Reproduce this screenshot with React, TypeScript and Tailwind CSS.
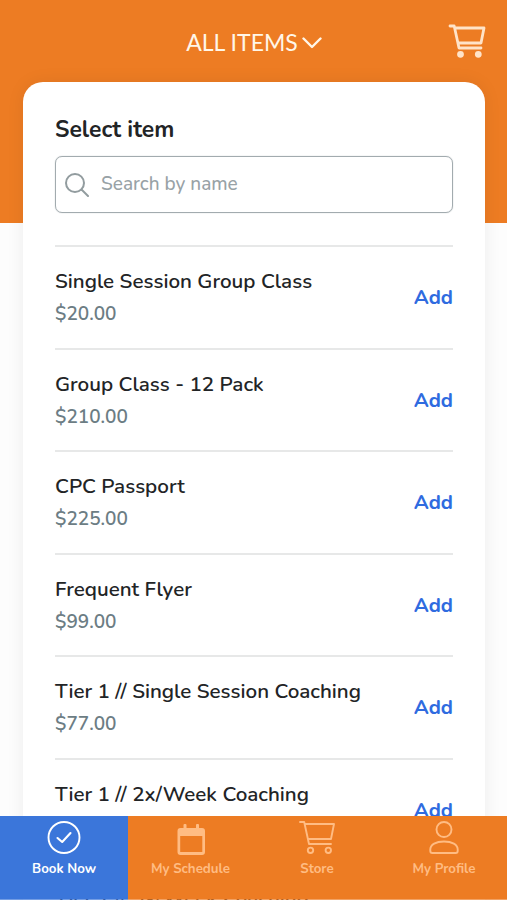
import React, { useState } from 'react';
import clsx from 'clsx';

interface Item {
  name: string;
  price: string;
}

const ITEMS: Item[] = [
  { name: 'Single Session Group Class', price: '$20.00' },
  { name: 'Group Class - 12 Pack', price: '$210.00' },
  { name: 'CPC Passport', price: '$225.00' },
  { name: 'Frequent Flyer', price: '$99.00' },
  { name: 'Tier 1 // Single Session Coaching', price: '$77.00' },
  { name: 'Tier 1 // 2x/Week Coaching', price: '$520.00' },
  { name: 'Tier 1 // 3x/Week Coaching', price: '$720.00' },
];

const CartIcon = ({ className, filled }: { className?: string; filled?: boolean }) => (
  <svg className={className} viewBox="0 0 38 34" fill="none" stroke="currentColor" strokeWidth={filled ? 2.8 : 1.9} strokeLinecap="round" strokeLinejoin="round">
    <path d="M2 2H6.200L11 24H33M6.800 4H36L33 19H10" />
    <circle cx="12.5" cy="30.3" r={filled ? 2 : 2.7} fill={filled ? 'currentColor' : 'none'} />
    <circle cx="30.3" cy="30.3" r={filled ? 2 : 2.7} fill={filled ? 'currentColor' : 'none'} />
  </svg>
);

const CheckIcon = () => (
  <svg className="h-[34px] w-[34px]" viewBox="0 0 34 34" fill="none" stroke="currentColor" strokeWidth="1.9" strokeLinecap="round" strokeLinejoin="round">
    <circle cx="17" cy="17.5" r="15.5" />
    <path d="M10.500 18L15.200 22L23.500 13" strokeWidth="2.1" />
  </svg>
);

const CalendarIcon = () => (
  <svg className="h-[34px] w-[34px]" viewBox="0 0 34 34" fill="currentColor">
    <rect x="9.500" y="4" width="3" height="7" rx="1" />
    <rect x="22" y="4" width="3" height="7" rx="1" />
    <path fillRule="evenodd" d="M6.500 8H28a3 3 0 0 1 3 3V32a3 3 0 0 1-3 3H6.500A3 3 0 0 1 3.500 32V11A3 3 0 0 1 6.500 8ZM6.200 16V32H28.300V16Z" />
  </svg>
);

const ProfileIcon = () => (
  <svg className="h-[34px] w-[34px]" viewBox="0 0 34 34" fill="none" stroke="currentColor" strokeWidth="1.9" strokeLinejoin="round">
    <circle cx="17" cy="9.500" r="7.500" />
    <path d="M3.300 31V29.500C3.300 24.500 9 21.500 17 21.500S30.700 24.500 30.700 29.500V31Q30.700 33 28.700 33H5.300Q3.300 33 3.300 31Z" />
  </svg>
);

const TABS = [
  { label: 'Book Now', icon: <CheckIcon /> },
  { label: 'My Schedule', icon: <CalendarIcon /> },
  { label: 'Store', icon: <CartIcon className="h-[34px] w-[38px]" /> },
  { label: 'My Profile', icon: <ProfileIcon /> },
];

const ItemRow = ({ item }: { item: Item }) => (
  <div className="flex h-[102.5px] shrink-0 justify-between border-t-2 border-[#e7e8e8]">
    <div className="pt-[19px]">
      <p className="text-[20.6px] leading-[31px] font-semibold whitespace-nowrap text-[#222426]">{item.name}</p>
      <p className="text-[19px] leading-[34px] font-semibold text-[#6c7d84]">{item.price}</p>
    </div>
    <button className="mt-[35px] h-[31px] text-[20.3px] leading-[31px] font-bold text-[#2f6be0]">Add</button>
  </div>
);

export default function App() {
  const [active, setActive] = useState('Book Now');
  const [search, setSearch] = useState('');

  return (
    <div className="relative h-[900px] w-[507px] overflow-hidden bg-white bg-[linear-gradient(#ed7c23_223px,#fdfdfd_223px)] font-['Nunito','Lato',sans-serif]">
      {/* Header */}
      <header className="grid h-[82px] grid-cols-[1fr_auto_1fr] items-center px-[21px] text-[#fff6e8]">
        <button className="col-start-2 flex items-center gap-1 pt-0.5 pl-px font-['Lato',sans-serif] text-[23px] leading-7">
          ALL ITEMS
          <svg className="mt-0.5 h-3 w-5" viewBox="0 0 20 12" fill="none" stroke="currentColor" strokeWidth="2.400" strokeLinecap="round" strokeLinejoin="round">
            <path d="M1.500 1.500L10 10L18.500 1.500" />
          </svg>
        </button>
        <CartIcon filled className="h-[34px] w-[38px] justify-self-end text-[#ffe3c8]" />
      </header>

      <main className="mr-[22px] ml-[23px] flex h-[830px] flex-col rounded-t-[20px] bg-white px-8 pt-[33px] shadow-[0_0_18px_rgba(0,0,0,0.07)]">
        <h1 className="text-[22.9px] leading-[30px] font-bold text-[#222426]">Select item</h1>
        <div className="mt-[11px] flex h-[57px] shrink-0 items-center gap-3 rounded-[7px] border-[1.500px] border-[#a2abaf] pl-[9px] shadow-[0_0_1px_#a2abaf]">
          <svg className="h-6 w-6 text-[#929c9f]" viewBox="0 0 24 24" fill="none" stroke="currentColor" strokeWidth="2" strokeLinecap="round">
            <circle cx="10" cy="10" r="9" />
            <path d="M16.500 16.500L23 23" />
          </svg>
          <input
            className="w-[300px] bg-transparent text-[19px] font-medium text-[#222426] outline-none placeholder:text-[#98a2a6]"
            placeholder="Search by name"
            value={search}
            onChange={(e) => setSearch(e.target.value)}
          />
        </div>
        <div className="mt-8">
          {ITEMS.map((item) => (
            <ItemRow key={item.name} item={item} />
          ))}
        </div>
      </main>

      {/* Bottom navigation */}
      <nav className="absolute inset-x-0 bottom-px grid h-[83px] grid-cols-[128px_125px_128px_126px] bg-[#ed7c23]">
        {TABS.map((tab) => (
          <button
            key={tab.label}
            onClick={() => setActive(tab.label)}
            className={clsx('flex flex-col items-center pt-1', active === tab.label ? 'bg-[#3b76da] text-white' : 'text-[#ffbc83]')}
          >
            <span className="h-[34px] [&>svg]:overflow-visible">{tab.icon}</span>
            <span className="mt-1.5 text-[13.3px] leading-[18px] font-bold whitespace-nowrap">{tab.label}</span>
          </button>
        ))}
      </nav>
      <div className="absolute inset-x-0 bottom-0 flex h-px opacity-70">
        <div className="w-32 bg-[#3b76da]" />
        <div className="flex-1 bg-[#ed7c23]" />
      </div>
    </div>
  );
}
